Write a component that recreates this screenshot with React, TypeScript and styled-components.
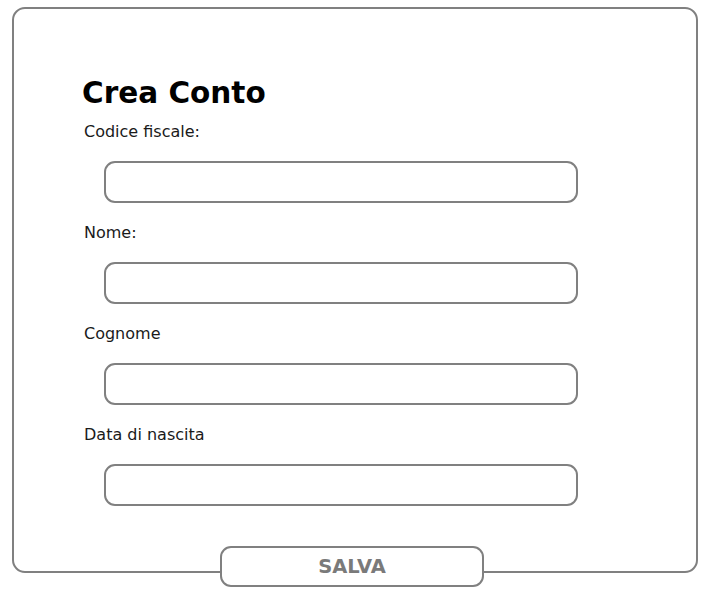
import React from "react";
import styled, { createGlobalStyle } from "styled-components";

const Global = createGlobalStyle`
  html, body { margin: 0; padding: 0; background: #ffffff; }
  body { font-family: "DejaVu Sans", "Open Sans", sans-serif; }
`;

const Page = styled.div`
  padding: 7px 13px 22px 12px;
`;

const Card = styled.form`
  position: relative;
  box-sizing: border-box;
  width: 686px;
  height: 566px;
  border: 2px solid #808080;
  border-radius: 13px;
  padding: 65px 0 0 68px;
  display: flex;
  flex-direction: column;
`;

const Title = styled.h1`
  margin: 1px 0 10px 0;
  font-size: 29.5px;
  line-height: 36px;
  font-weight: 700;
  color: #000;
`;

const Field = styled.div`
  display: flex;
  flex-direction: column;
  margin-bottom: 19px;
`;

const Label = styled.label`
  margin: 1px 0 0 2px;
  font-size: 16px;
  line-height: 20px;
  color: #1a1a1a;
`;

const Input = styled.input`
  box-sizing: border-box;
  margin: 19px 0 0 22px;
  width: 474px;
  height: 42px;
  border: 2px solid #808080;
  border-radius: 11px;
  background: #fff;
  outline: none;
`;

const SaveButton = styled.button`
  position: absolute;
  left: 206px;
  top: 537px;
  box-sizing: border-box;
  width: 264px;
  height: 41px;
  border: 2px solid #808080;
  border-radius: 11px;
  background: #fff;
  color: #7a7a7a;
  font-family: inherit;
  font-size: 19.5px;
  font-weight: 700;
  cursor: pointer;
`;

const fields = ["Codice fiscale:", "Nome:", "Cognome", "Data di nascita"];

export default function App() {
  return (
    <>
      <Global />
      <Page>
        <Card onSubmit={(e) => e.preventDefault()}>
          <Title>Crea Conto</Title>
          {fields.map((f) => (
            <Field key={f}>
              <Label>{f}</Label>
              <Input type="text" />
            </Field>
          ))}
          <SaveButton type="submit">SALVA</SaveButton>
        </Card>
      </Page>
    </>
  );
}
